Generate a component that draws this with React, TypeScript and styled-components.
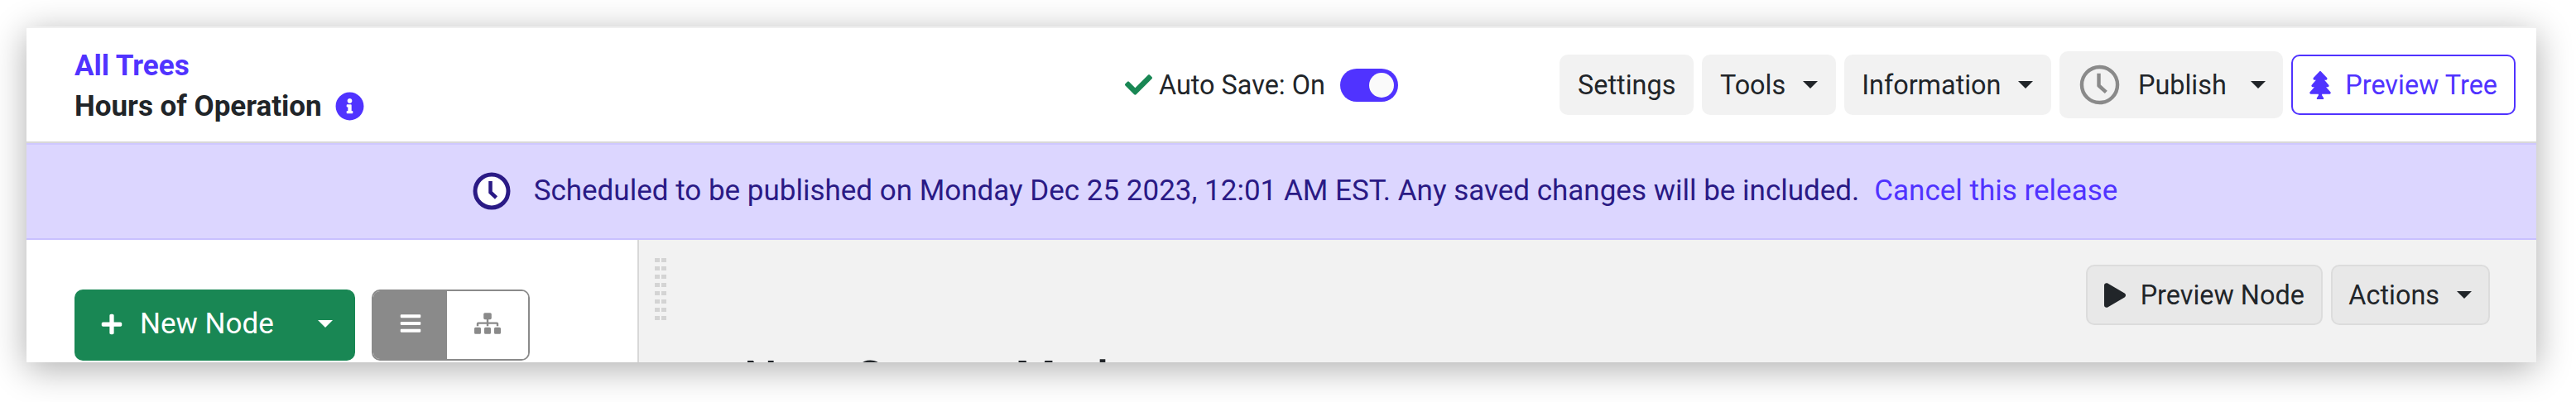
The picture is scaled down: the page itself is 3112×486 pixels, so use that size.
import React from "react";
import styled, { createGlobalStyle } from "styled-components";
import { FaCheck, FaInfoCircle, FaTree, FaPlay, FaPlus, FaBars, FaSitemap } from "react-icons/fa";

const violet = "#5033ff";
const ink = "#212529";
const green = "#198754";
const slate = "#8a8a8a";

const Global = createGlobalStyle`
  html, body { margin: 0; padding: 0; background: #fff; }
  body { font-family: Roboto, "Liberation Sans", sans-serif; color: ${ink}; }
  * { box-sizing: border-box; }
`;

const Page = styled.div`
  width: 3112px;
  height: 486px;
  padding: 32px 48px 48px 32px;
  overflow: hidden;
`;

const Card = styled.div`
  height: 406px;
  background: #fff;
  border-top: 2px solid #f0f0f0;
  box-shadow: 0 8px 40px rgba(0, 0, 0, 0.32);
  overflow: hidden;
`;

const Header = styled.header`
  box-sizing: content-box;
  height: 137px;
  display: flex;
  align-items: center;
  padding: 0 25px 0 58px;
  border-bottom: 2px solid #d8d8d8;
`;

const TitleBlock = styled.div`
  width: 1269px;
  padding-top: 3px;
  font-size: 35px;
  line-height: 49px;
  font-weight: 700;
`;

const BackLink = styled.a`
  display: block;
  color: ${violet};
`;

const TreeName = styled.div`
  display: flex;
  align-items: center;
  gap: 16px;
  color: ${ink};
  svg { color: ${violet}; font-size: 35px; }
`;

const AutoSave = styled.div`
  display: flex;
  align-items: center;
  font-size: 32.4px;
  line-height: 48px;
`;

const CheckMark = styled.span`
  display: flex;
  color: ${green};
  font-size: 33px;
  margin-right: 8px;
`;

const SwitchTrack = styled.span`
  display: flex;
  justify-content: flex-end;
  align-items: center;
  width: 70px;
  height: 40px;
  margin-left: 18px;
  padding: 0 5px;
  border-radius: 20px;
  background: ${violet};
`;

const SwitchKnob = styled.span`
  width: 30px;
  height: 30px;
  border-radius: 50%;
  background: #fafafa;
`;

const HeaderActions = styled.div`
  margin-left: auto;
  display: flex;
  align-items: center;
  gap: 10px;
`;

const Button = styled.button<{ $tall?: boolean }>`
  display: flex;
  align-items: center;
  height: ${(p) => (p.$tall ? "81px" : "73px")};
  padding: 0 21.5px 0 ${(p) => (p.$tall ? "24px" : "21.5px")};
  border: 0;
  border-radius: 10px;
  background: #f2f2f2;
  color: ${ink};
  font: 400 32.4px/48px Roboto, sans-serif;
  white-space: nowrap;
`;

const PlainButton = styled(Button)`
  padding: 0 22px;
`;

const Caret = styled.span<{ $gap?: number }>`
  display: block;
  margin-left: ${(p) => p.$gap ?? 21}px;
  border-top: 9.6px solid currentColor;
  border-left: 9.6px solid transparent;
  border-right: 9.6px solid transparent;
`;

const ClockIcon = styled.svg`
  display: block;
  flex: none;
  width: 49px;
  height: 49px;
  margin-right: 22px;
`;

const OutlineButton = styled(Button)`
  padding: 0 20px;
  background: #fff;
  border: 2px solid ${violet};
  color: ${violet};
  svg { width: 26px; height: 34px; margin-right: 17px; }
`;

const Banner = styled.div`
  height: 117px;
  display: flex;
  align-items: center;
  justify-content: center;
  padding: 0 0 2px 33px;
  background: #dcd6ff;
  border-top: 2px solid #cfc8ff;
  border-bottom: 2px solid #c9c0ff;
  color: #2a1a85;
  font-size: 35px;
  line-height: 48px;
`;

const BannerClock = styled.svg`
  display: block;
  width: 46px;
  height: 46px;
  margin-right: 28px;
`;

const BannerLink = styled.a`
  color: ${violet};
  margin-left: 18px;
`;

const Main = styled.main`
  display: flex;
  height: 148px;
`;

const Sidebar = styled.aside`
  flex: none;
  width: 740px;
  display: flex;
  align-items: flex-start;
  gap: 20px;
  padding: 60px 0 0 58px;
  border-right: 2px solid #d8d8d8;
`;

const NewNodeButton = styled.button`
  display: flex;
  align-items: center;
  flex: none;
  width: 339px;
  height: 86px;
  padding: 0 0 3px 31px;
  border: 0;
  border-radius: 10px;
  background: ${green};
  color: #fff;
  font: 400 35px/48px Roboto, sans-serif;
  white-space: nowrap;
  svg { font-size: 28px; margin-right: 20px; }
`;

const ViewToggle = styled.div`
  display: flex;
  width: 191px;
  height: 86px;
  border: 2px solid ${slate};
  border-radius: 10px;
  overflow: hidden;
`;

const ViewOption = styled.div<{ $active?: boolean }>`
  display: flex;
  align-items: center;
  justify-content: center;
  flex: ${(p) => (p.$active ? "0 0 89px" : "1")};
  padding-bottom: 4px;
  background: ${(p) => (p.$active ? slate : "#fff")};
  color: ${(p) => (p.$active ? "#fff" : slate)};
  font-size: ${(p) => (p.$active ? "28px" : "32px")};
`;

const Content = styled.section`
  flex: 1;
  background: #f2f2f2;
  padding: 22px 56px 0 19px;
`;

const ContentTop = styled.div`
  display: flex;
  align-items: flex-start;
`;

const Grip = styled.div`
  display: grid;
  grid-template-columns: repeat(2, 6px);
  grid-auto-rows: 5px;
  column-gap: 2px;
  row-gap: 5px;
  span { background: #d4d4d4; }
`;

const NodeActions = styled.div`
  margin-left: auto;
  margin-top: 8px;
  display: flex;
  gap: 10px;
`;

const GreyButton = styled(Button)`
  padding: 0 20px 0 19.5px;
  background: #e8e8e8;
  border: 2px solid #dcdcdc;
  svg { width: 26px; height: 30px; margin-right: 18px; }
`;

const NodeTitle = styled.h1`
  margin: 31px 0 0 108px;
  font: 500 56px/67px Roboto, sans-serif;
  word-spacing: 29px;
  color: ${ink};
`;

export default function App() {
  return (
    <Page>
      <Global />
      <Card>
        <Header>
          <TitleBlock>
            <BackLink>All Trees</BackLink>
            <TreeName>
              Hours of Operation <FaInfoCircle />
            </TreeName>
          </TitleBlock>
          <AutoSave>
            <CheckMark><FaCheck /></CheckMark>
            Auto Save: On
            <SwitchTrack><SwitchKnob /></SwitchTrack>
          </AutoSave>
          <HeaderActions>
            <PlainButton>Settings</PlainButton>
            <Button>Tools<Caret /></Button>
            <Button>Information<Caret /></Button>
            <Button $tall>
              <ClockIcon viewBox="0 0 50 50" fill="none" stroke={slate} strokeWidth="4.5">
                <circle cx="25" cy="25" r="22" />
                <path d="M24 11v15l9 8" strokeLinejoin="round" />
              </ClockIcon>
              Publish
              <Caret $gap={29} />
            </Button>
            <OutlineButton><FaTree />Preview Tree</OutlineButton>
          </HeaderActions>
        </Header>
        <Banner>
          <BannerClock viewBox="0 0 46 46" fill="#fff" stroke="#2a1a85" strokeWidth="5">
            <circle cx="23" cy="23" r="20" />
            <path d="M21.5 11v13.5l7 6.5" fill="none" strokeWidth="4.5" />
          </BannerClock>
          Scheduled to be published on Monday Dec 25 2023, 12:01 AM EST. Any saved changes will be included.
          <BannerLink>Cancel this release</BannerLink>
        </Banner>
        <Main>
          <Sidebar>
            <NewNodeButton>
              <FaPlus />New Node<Caret $gap={53} />
            </NewNodeButton>
            <ViewToggle>
              <ViewOption $active><FaBars /></ViewOption>
              <ViewOption><FaSitemap /></ViewOption>
            </ViewToggle>
          </Sidebar>
          <Content>
            <ContentTop>
              <Grip>
                {Array.from({ length: 16 }, (_, i) => <span key={i} />)}
              </Grip>
              <NodeActions>
                <GreyButton><FaPlay />Preview Node</GreyButton>
                <GreyButton>Actions<Caret /></GreyButton>
              </NodeActions>
            </ContentTop>
            <NodeTitle>Not Group Mode</NodeTitle>
          </Content>
        </Main>
      </Card>
    </Page>
  );
}
